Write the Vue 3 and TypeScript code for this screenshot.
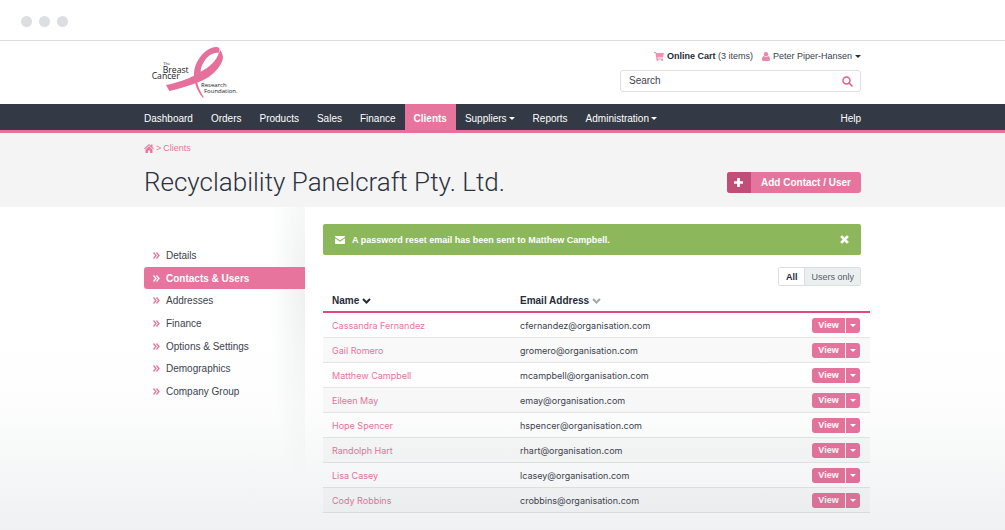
<script setup lang="ts">
import { ref } from 'vue'

interface NavItem { label: string; menu?: boolean; active?: boolean }
interface Contact { name: string; email: string }

const navItems: NavItem[] = [
  { label: 'Dashboard' },
  { label: 'Orders' },
  { label: 'Products' },
  { label: 'Sales' },
  { label: 'Finance' },
  { label: 'Clients', active: true },
  { label: 'Suppliers', menu: true },
  { label: 'Reports' },
  { label: 'Administration', menu: true },
]

const sections: string[] = [
  'Details',
  'Contacts & Users',
  'Addresses',
  'Finance',
  'Options & Settings',
  'Demographics',
  'Company Group',
]
const currentSection = ref('Contacts & Users')

const contacts: Contact[] = [
  { name: 'Cassandra Fernandez', email: 'cfernandez@organisation.com' },
  { name: 'Gail Romero', email: 'gromero@organisation.com' },
  { name: 'Matthew Campbell', email: 'mcampbell@organisation.com' },
  { name: 'Eileen May', email: 'emay@organisation.com' },
  { name: 'Hope Spencer', email: 'hspencer@organisation.com' },
  { name: 'Randolph Hart', email: 'rhart@organisation.com' },
  { name: 'Lisa Casey', email: 'lcasey@organisation.com' },
  { name: 'Cody Robbins', email: 'crobbins@organisation.com' },
]

const filter = ref<'all' | 'users'>('all')
const alertOpen = ref(true)
const query = ref('')
</script>

<template>
  <div class="window">
    <div class="chrome"><i></i><i></i><i></i></div>

    <header class="wrap header">
      <a href="#" class="logo" aria-label="The Breast Cancer Research Foundation">
        <svg viewBox="450 135 270 162" width="90" height="54">
          <path fill="#e5709b" fill-rule="evenodd" d="M498 255C530 248 560 238 582 227C580 200 596 168 622 150C636 141 652 139 657 144C662 152 668 160 669 171C668 192 648 216 626 231C602 247 550 263 508 273ZM602 215C626 204 652 180 656 159C640 156 622 168 611 187C605 197 602 206 602 215Z" />
          <path fill="#e5709b" d="M583 232C584 256 594 276 609 294L611 291C600 272 592 258 591 240Z" />
          <path fill="none" stroke="#fff" stroke-width="2" d="M657 158C659 154 660 151 659 146" />
          <g fill="#222" font-family="'Open Sans', 'Noto Sans', sans-serif">
            <text x="490" y="194" font-size="12">The</text>
            <text x="488" y="218" font-size="26">Breast</text>
            <text x="455" y="237" font-size="26">Cancer</text>
            <text x="603" y="260" font-size="18">Research</text>
            <text x="612" y="279" font-size="18">Foundation.</text>
          </g>
        </svg>
      </a>
      <div class="account">
        <div class="account-links">
          <a href="#" class="cart">
            <svg viewBox="0 0 20 18" width="10" height="9" fill="#ee92b3"><path d="M0 0h4l1 2h15l-2 9H7l.4 2H18v2H5L2.800 2H0z" /><circle cx="7" cy="16" r="2" /><circle cx="16" cy="16" r="2" /></svg>
            <span><b>Online Cart</b> (3 items)</span>
          </a>
          <a href="#" class="user">
            <svg viewBox="0 0 18 20" width="8" height="9" fill="#ea86aa"><circle cx="9" cy="5" r="5" /><path d="M4 9c-3 1-4 5-4 8 0 2 1 3 3 3h12c2 0 3-1 3-3 0-3-1-7-4-8-3 3-7 3-10 0z" /></svg>
            <span>Peter Piper-Hansen</span>
            <i class="caret"></i>
          </a>
        </div>
        <form class="search" @submit.prevent>
          <input v-model="query" type="text" placeholder="Search" aria-label="Search" />
          <button type="submit" aria-label="Search">
            <svg viewBox="0 0 22 22" width="11" height="11" fill="none" stroke="#e45a8b" stroke-width="3"><circle cx="9" cy="9" r="7" /><path d="M14 14l6 6" stroke-linecap="round" /></svg>
          </button>
        </form>
      </div>
    </header>

    <nav class="nav" aria-label="Main">
      <div class="wrap nav-row">
        <a v-for="item in navItems" :key="item.label" href="#" :class="{ active: item.active }">
          {{ item.label }}<i v-if="item.menu" class="caret"></i>
        </a>
        <a href="#" class="help">Help</a>
      </div>
    </nav>

    <section class="banner">
      <div class="wrap">
        <div class="crumbs">
          <a href="#" aria-label="Home"><svg viewBox="0 0 20 18" width="10" height="9" fill="#e77aa1"><path d="M10 0L0 9l1.500 1.500L10 3l8.500 7.500L20 9l-3-2.700V1h-3v2.600z" /><path d="M10 4.500L3 11v7h5v-5h4v5h5v-7z" /></svg></a>
          <span>&gt;</span>
          <a href="#">Clients</a>
        </div>
        <div class="heading">
          <h1>Recyclability Panelcraft Pty. Ltd.</h1>
          <button type="button" class="add">
            <span class="plus"><svg viewBox="0 0 10 10" width="9" height="9" fill="#fff"><path d="M3.500 0h3v3.500H10v3H6.500V10h-3V6.500H0v-3h3.500z" /></svg></span>
            <span class="add-label">Add Contact / User</span>
          </button>
        </div>
      </div>
    </section>

    <div class="wrap body">
      <aside>
        <ul>
          <li v-for="s in sections" :key="s">
            <a href="#" :class="{ active: s === currentSection }" @click.prevent="currentSection = s">
              <svg viewBox="0 0 14 14" width="7" height="7" fill="none" stroke="currentColor" stroke-width="2.500"><path d="M1 1l5 6-5 6M7 1l5 6-5 6" /></svg>
              <span>{{ s }}</span>
            </a>
          </li>
        </ul>
      </aside>

      <main>
        <div v-if="alertOpen" class="alert" role="status">
          <svg viewBox="0 0 20 16" width="10" height="8" fill="#fff"><path d="M1 0h18l1 1v1l-10 7L0 2V1z" /><path d="M0 4.500l10 7 10-7V15l-1 1H1l-1-1z" /></svg>
          <span>A password reset email has been sent to Matthew Campbell.</span>
          <button type="button" aria-label="Dismiss" @click="alertOpen = false">
            <svg viewBox="0 0 16 16" width="9" height="9" stroke="#fff" stroke-width="5"><path d="M2 2l12 12M14 2L2 14" /></svg>
          </button>
        </div>

        <div class="filter" role="group" aria-label="Show">
          <button type="button" :class="{ on: filter === 'all' }" @click="filter = 'all'">All</button>
          <button type="button" :class="{ on: filter === 'users' }" @click="filter = 'users'">Users only</button>
        </div>

        <table>
          <thead>
            <tr>
              <th class="col-name"><button type="button">Name <svg viewBox="0 0 18 12" width="9" height="6" fill="none" stroke="#252c39" stroke-width="4"><path d="M2 2l7 7 7-7" /></svg></button></th>
              <th class="col-email"><button type="button">Email Address <svg viewBox="0 0 18 12" width="9" height="6" fill="none" stroke="#a3a6aa" stroke-width="4"><path d="M2 2l7 7 7-7" /></svg></button></th>
              <th class="col-action" aria-label="Actions"></th>
            </tr>
          </thead>
          <tbody>
            <tr v-for="c in contacts" :key="c.email">
              <td><a href="#">{{ c.name }}</a></td>
              <td>{{ c.email }}</td>
              <td class="action">
                <div class="split">
                  <button type="button">View</button>
                  <button type="button" class="more" :aria-label="'More actions for ' + c.name"><i class="caret"></i></button>
                </div>
              </td>
            </tr>
          </tbody>
        </table>
      </main>
    </div>
  </div>
</template>

<style>
body {
  margin: 0;
  background: #fff;
}
</style>

<style scoped>
* {
  box-sizing: border-box;
}
.window {
  position: relative;
  min-height: 100vh;
  overflow: hidden;
  font: 10px/14px "Liberation Sans", Arial, sans-serif;
  color: #3b424d;
}
.window::after {
  content: "";
  position: absolute;
  inset: auto 0 0;
  height: 190px;
  background: linear-gradient(rgba(60, 75, 90, 0), rgba(60, 75, 90, 0.01) 35%, rgba(60, 75, 90, 0.08));
  pointer-events: none;
}
a {
  color: inherit;
  text-decoration: none;
}
button {
  margin: 0;
  padding: 0;
  border: 0;
  background: none;
  font: inherit;
  color: inherit;
  cursor: pointer;
}
svg {
  display: block;
  flex: none;
}
.wrap {
  width: calc(100% - 40px);
  max-width: 717px;
  margin: 0 auto;
}
.caret {
  display: inline-block;
  border: 3px solid transparent;
  border-top-color: currentColor;
  border-bottom: 0;
}

.chrome {
  display: flex;
  align-items: center;
  gap: 7px;
  height: 41px;
  padding: 2px 21px 0;
  border-bottom: 1px solid #dcdde0;
}
.chrome i {
  width: 11px;
  height: 11px;
  border-radius: 50%;
  background: #dddee2;
}

.header {
  display: flex;
  justify-content: space-between;
  height: 63px;
}
.logo {
  padding: 4px 6px 0;
}
.account {
  width: 241px;
  padding-top: 8px;
}
.account-links {
  display: flex;
  justify-content: flex-end;
  gap: 9px;
  font-size: 9px;
}
.account-links a {
  display: flex;
  align-items: center;
  gap: 3px;
}
.account-links b {
  color: #252c39;
}
.account-links .caret {
  color: #252c39;
}
.search {
  display: flex;
  align-items: center;
  height: 22px;
  margin-top: 7px;
  padding-right: 7px;
  border: 1px solid #dfe0e2;
  border-radius: 3px;
}
.search input {
  flex: 1;
  min-width: 0;
  padding: 0 8px;
  border: 0;
  outline: 0;
  background: none;
  font: inherit;
  color: inherit;
}
.search input::placeholder {
  color: #3b424d;
  opacity: 1;
}

.nav {
  background: #333a45;
  border-bottom: 3px solid #e5709b;
  color: #fff;
}
.nav-row {
  display: flex;
}
.nav-row a {
  display: flex;
  align-items: center;
  gap: 2px;
  height: 26px;
  padding: 3px 9px 0;
}
.nav-row a:first-child {
  padding-left: 0;
}
.nav-row .active {
  background: #e7749c;
  font-weight: bold;
}
.nav-row .help {
  margin-left: auto;
  padding-right: 0;
}

.banner {
  height: 74px;
  background: #f4f4f4;
}
.crumbs {
  display: flex;
  align-items: center;
  gap: 2px;
  padding-top: 8px;
  font-size: 9px;
  color: #e7749c;
}
.heading {
  display: flex;
  align-items: center;
  justify-content: space-between;
  padding-top: 11px;
}
h1 {
  margin: 0;
  font: 300 26px/32px Roboto, "Liberation Sans", sans-serif;
  color: #2b3240;
}
.add {
  display: flex;
  height: 21px;
  border-radius: 3px;
  overflow: hidden;
  background: #e7749c;
  color: #fff;
  font-weight: bold;
  line-height: 21px;
}
.plus {
  display: grid;
  place-items: center;
  width: 24px;
  height: 21px;
  background: #c14e77;
}
.add-label {
  padding: 0 10px;
}

.body {
  display: flex;
  align-items: flex-start;
}
aside {
  flex: none;
  width: 161px;
  height: 280px;
  padding-top: 37px;
  background: radial-gradient(ellipse 36px 190px at 100% 32%, #eff1f1, rgba(239, 241, 241, 0));
}
ul {
  display: grid;
  grid-auto-rows: 1fr;
  height: 159px;
  margin: 0;
  padding: 0;
  list-style: none;
}
li a {
  display: flex;
  align-items: center;
  gap: 6px;
  height: 100%;
  padding-left: 9px;
  border-radius: 3px 0 0 3px;
}
li span {
  padding-top: 1px;
}
li svg {
  color: #e7749c;
}
li .active {
  background: #e7749c;
  color: #fff;
  font-weight: bold;
}
li .active svg {
  color: #fff;
}

main {
  flex: 1;
  min-width: 0;
  padding: 17px 0 0 18px;
}
.alert {
  display: flex;
  align-items: center;
  gap: 7px;
  height: 31px;
  padding: 0 12px;
  border-radius: 2px;
  background: #8cb85b;
  color: #fff;
  font-size: 9px;
  font-weight: bold;
}
.alert button {
  margin-left: auto;
}
.filter {
  display: flex;
  width: fit-content;
  margin: 12px 0 0 auto;
  border: 1px solid #dcdfe1;
  border-radius: 2px;
}
.filter button {
  height: 17px;
  padding: 0 6px;
  background: #eceff0;
  color: #565c65;
  font-size: 9px;
}
.filter button + button {
  border-left: 1px solid #dcdfe1;
}
.filter .on {
  padding: 0 7px;
  background: #fff;
  color: #252c39;
  font-weight: bold;
}

table {
  width: calc(100% + 9px);
  border-collapse: collapse;
  table-layout: fixed;
}
.col-name {
  width: 188px;
}
.col-action {
  width: 68px;
}
th {
  height: 26px;
  padding: 4px 9px 0;
  border-bottom: 2px solid #e14a80;
  text-align: left;
}
th button {
  display: flex;
  align-items: center;
  gap: 3px;
  color: #252c39;
  font-weight: bold;
}
td {
  height: 25px;
  padding: 2px 9px 0;
  border-bottom: 1px solid #e6e6e7;
  font-family: Inter, "Liberation Sans", sans-serif;
  font-size: 9px;
}
td a {
  color: #e7749c;
}
tbody tr:nth-child(even) {
  background: #f9f9f9;
}
.action {
  padding-right: 10px;
}
.split {
  display: flex;
  justify-content: flex-end;
  gap: 1px;
}
.split button {
  width: 33px;
  height: 15px;
  border-radius: 3px 0 0 3px;
  background: #e5739b;
  color: #fff;
  font: bold 9px/15px "Liberation Sans", Arial, sans-serif;
}
.split .more {
  display: grid;
  place-items: center;
  width: 14px;
  border-radius: 0 3px 3px 0;
}
</style>
